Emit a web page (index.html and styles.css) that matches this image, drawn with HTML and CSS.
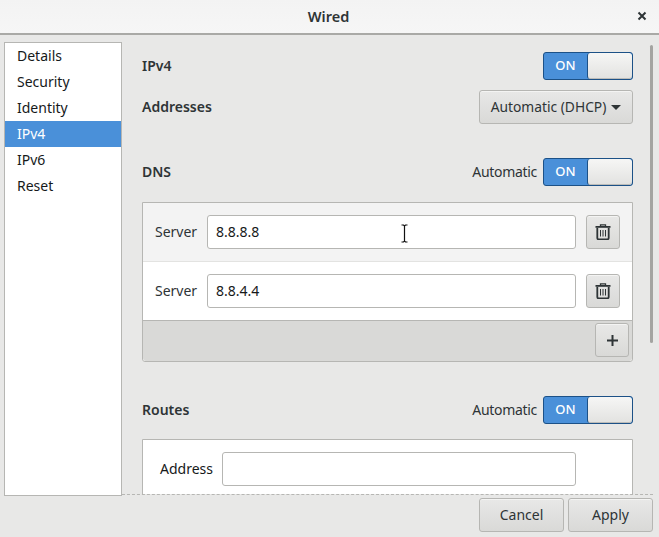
FILE: index.html
```html
<!DOCTYPE html>
<html lang="en">
<head>
<meta charset="utf-8">
<title>Wired</title>
<link rel="stylesheet" href="styles.css">
</head>
<body>
<div class="window">
  <header class="titlebar">
    <span class="title">Wired</span>
    <svg class="close" width="10" height="10" viewBox="0 0 10 10"><path d="M1.500 1.500l7 7M8.500 1.500l-7 7" stroke="#2e3436" stroke-width="2" fill="none"/></svg>
  </header>
  <div class="main">
    <nav class="sidebar">
      <div class="nav-item">Details</div>
      <div class="nav-item">Security</div>
      <div class="nav-item">Identity</div>
      <div class="nav-item selected">IPv4</div>
      <div class="nav-item">IPv6</div>
      <div class="nav-item">Reset</div>
    </nav>
    <div class="content">
      <div class="scrollbar"></div>
      <div class="row row-ipv4">
        <span class="heading">IPv4</span>
        <div class="switch"><span class="on">ON</span><span class="knob"></span></div>
      </div>
      <div class="row row-addr">
        <span class="heading">Addresses</span>
        <button class="btn dropdown">Automatic (DHCP)<span class="caret"></span></button>
      </div>
      <div class="row row-dns">
        <span class="heading">DNS</span>
        <div class="auto"><span class="auto-label">Automatic</span><div class="switch"><span class="on">ON</span><span class="knob"></span></div></div>
      </div>
      <div class="panel">
        <div class="server first">
          <label>Server</label>
          <div class="entry">8.8.8.8</div>
          <button class="btn icon-btn"><svg width="16" height="16" viewBox="0 0 16 16"><path d="M5.500 2V.8h5V2" fill="none" stroke="#2e3436" stroke-width="1.300"/><path d="M.5 2h15v1.800H.5z" fill="#2e3436"/><path d="M2.300 4v10c0 .8.500 1.300 1.300 1.300h8.800c.8 0 1.300-.5 1.300-1.300V4" fill="none" stroke="#2e3436" stroke-width="1.800"/><path d="M5.500 6v6.500M8 6v6.500M10.500 6v6.500" stroke="#2e3436" stroke-width="1"/></svg></button>
        </div>
        <div class="server">
          <label>Server</label>
          <div class="entry">8.8.4.4</div>
          <button class="btn icon-btn"><svg width="16" height="16" viewBox="0 0 16 16"><path d="M5.500 2V.8h5V2" fill="none" stroke="#2e3436" stroke-width="1.300"/><path d="M.5 2h15v1.800H.5z" fill="#2e3436"/><path d="M2.300 4v10c0 .8.500 1.300 1.300 1.300h8.800c.8 0 1.300-.5 1.300-1.300V4" fill="none" stroke="#2e3436" stroke-width="1.800"/><path d="M5.500 6v6.500M8 6v6.500M10.500 6v6.500" stroke="#2e3436" stroke-width="1"/></svg></button>
        </div>
        <div class="panel-foot">
          <button class="btn icon-btn"><svg width="11" height="11" viewBox="0 0 11 11"><path d="M5.500 0v11M0 5.500h11" stroke="#2e3436" stroke-width="2"/></svg></button>
        </div>
      </div>
      <div class="row row-routes">
        <span class="heading">Routes</span>
        <div class="auto"><span class="auto-label">Automatic</span><div class="switch"><span class="on">ON</span><span class="knob"></span></div></div>
      </div>
      <div class="panel routes">
        <div class="route">
          <label>Address</label>
          <div class="entry"></div>
        </div>
      </div>
    </div>
  </div>
  <footer class="actions">
    <button class="btn action">Cancel</button>
    <button class="btn action">Apply</button>
  </footer>
  <svg class="cursor" width="9" height="19" viewBox="0 0 9 19"><path d="M1.500 1h2l1 1 1-1h2M4.500 2v15M1.500 18h2l1-1 1 1h2" fill="none" stroke="#fff" stroke-width="2.400"/><path d="M1.500 1h2l1 1 1-1h2M4.500 2v15M1.500 18h2l1-1 1 1h2" fill="none" stroke="#111" stroke-width="1.200"/></svg>
</div>
</body>
</html>
```
FILE: styles.css
```css
* { box-sizing: border-box; }
html, body { margin: 0; padding: 0; }
body {
  width: 659px;
  height: 537px;
  overflow: hidden;
  font-family: "Noto Sans", "Open Sans", sans-serif;
  font-size: 14px;
  color: #2e3436;
}
.window {
  position: relative;
  width: 659px;
  height: 537px;
  background: #e8e8e7;
  display: flex;
  flex-direction: column;
}
.titlebar {
  height: 35px;
  flex: none;
  position: relative;
  display: flex;
  align-items: center;
  justify-content: center;
  background: linear-gradient(#f3f3f3, #f6f6f6);
  border-bottom: 2px solid #a9a9a6;
}
.title { font-weight: 600; font-size: 14.5px; color: #2e3436; padding: 0 2px 2px 0; }
.close { position: absolute; left: 637px; top: 11px; }
.main {
  height: 461px;
  flex: none;
  display: flex;
  padding-left: 4px;
}
.sidebar {
  width: 118px;
  flex: none;
  margin-top: 7px;
  height: 454px;
  background: #fff;
  border: 1px solid #b6b6b3;
  color: #16191a;
}
.nav-item { height: 26px; line-height: 25px; padding-left: 12px; }
.selected { background: #4a90d9; color: #fff; }
.content {
  position: relative;
  flex: 1;
  overflow: hidden;
  padding: 17px 20px 0 20px;
  border-bottom: 1px dashed #b6b6b3;
  height: 460px;
  margin-right: 6px;
}
.scrollbar {
  position: absolute;
  right: 0;
  top: 10px;
  width: 3px;
  height: 298px;
  background: #a4a4a1;
  border-radius: 2px;
}
.row { display: flex; align-items: center; justify-content: space-between; }
.row-ipv4 { height: 28px; }
.row-addr { height: 34px; margin-top: 10px; }
.row-dns { height: 28px; margin-top: 34px; }
.row-routes { height: 28px; margin-top: 34px; }
.heading { font-weight: 600; color: #2e3436; padding-bottom: 2px; }
.auto { display: flex; align-items: center; gap: 6px; }
.auto-label { letter-spacing: -0.3px; padding-bottom: 2px; }
.switch {
  display: flex;
  width: 90px;
  height: 28px;
  border: 1px solid #1c5187;
  border-radius: 3px;
  background: #4a90d9;
  color: #fff;
  overflow: hidden;
}
.on { width: 43px; line-height: 24px; text-align: center; font-size: 13px; font-weight: 500; }
.knob {
  flex: 1;
  background: linear-gradient(#f6f6f5, #e2e2e0);
  border-left: 1px solid #1c5187;
  border-radius: 3px;
  box-shadow: inset 0 -1px 0 #bcbcb9;
}
.btn {
  font: inherit;
  color: #2e3436;
  padding: 0 0 2px;
  border: 1px solid #b6b6b3;
  border-radius: 3px;
  background: linear-gradient(#e8e8e7, #d9d9d7);
  box-shadow: inset 0 1px 0 #f4f4f3;
  display: flex;
  align-items: center;
  justify-content: center;
}
.dropdown { width: 154px; height: 34px; gap: 5px; font-size: 13.800px; }
.caret {
  width: 0;
  height: 0;
  border-left: 5px solid transparent;
  border-right: 5px solid transparent;
  border-top: 5px solid #2e3436;
  margin-top: 2px;
}
.panel {
  margin-top: 16px;
  border: 1px solid #b6b6b3;
  border-radius: 0 0 3px 3px;
  background: #fff;
}
.server {
  height: 59px;
  display: flex;
  align-items: center;
  padding: 0 12px 1px 12px;
  gap: 10px;
  border-bottom: 1px solid #e3e3e1;
}
.first { background: #f3f3f3; }
.server:nth-child(2) { border-bottom-color: #b6b6b3; }
.server label { width: 42px; flex: none; }
.entry {
  flex: 1;
  height: 34px;
  line-height: 31px;
  padding-left: 8px;
  background: #fff;
  border: 1px solid #b6b6b3;
  border-radius: 3px;
  color: #16191a;
}
.icon-btn { width: 34px; height: 34px; flex: none; padding: 0; }
.panel-foot {
  height: 40px;
  display: flex;
  align-items: center;
  justify-content: flex-end;
  padding: 0 3px 2px 0;
  background: #d9d9d7;
  border-radius: 0 0 3px 3px;
}
.panel.routes { margin-top: 15px; height: 80px; }
.route {
  display: flex;
  align-items: center;
  height: 34px;
  margin-top: 12px;
  padding: 0 56px 0 17px;
  gap: 10px;
}
.route label { width: 52px; flex: none; padding-bottom: 2px; color: #16191a; }
.actions {
  flex: 1;
  display: flex;
  justify-content: flex-end;
  gap: 4px;
  padding: 2px 6px 5px 0;
}
.action { width: 85px; height: 34px; }
.cursor { position: absolute; left: 400px; top: 224px; }
```
